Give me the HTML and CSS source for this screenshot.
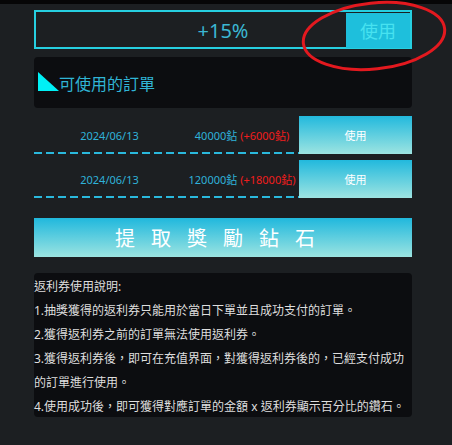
FILE: index.html
```html
<!DOCTYPE html>
<html lang="zh-Hant">
<head>
<meta charset="utf-8">
<link rel="stylesheet" href="styles.css">
</head>
<body>
<div class="topstrip"></div>
<main class="wrap">
  <section class="rate">
    <span class="rate-spacer"></span>
    <span class="rate-value">+15%</span>
    <button class="rate-btn">使用</button>
  </section>

  <section class="orders-head">
    <span class="tri"></span>
    <span class="orders-title">可使用的訂單</span>
  </section>

  <div class="order">
    <div class="order-info">
      <span class="date">2024/06/13</span>
      <span class="amount">40000鉆 <em class="bonus">(+6000鉆)</em></span>
    </div>
    <button class="use-btn">使用</button>
  </div>
  <div class="order order-2">
    <div class="order-info">
      <span class="date">2024/06/13</span>
      <span class="amount">120000鉆 <em class="bonus">(+18000鉆)</em></span>
    </div>
    <button class="use-btn">使用</button>
  </div>

  <button class="claim">提取獎勵鉆石</button>

  <section class="notes">
    <p>返利券使用說明:</p>
    <p>1.抽獎獲得的返利券只能用於當日下單並且成功支付的訂單。</p>
    <p>2.獲得返利券之前的訂單無法使用返利券。</p>
    <p>3.獲得返利券後，即可在充值界面，對獲得返利券後的，已經支付成功的訂單進行使用。</p>
    <p>4.使用成功後，即可獲得對應訂單的金額 x 返利券顯示百分比的鑽石。</p>
  </section>
</main>
<svg class="annot" width="452" height="90" viewBox="0 0 452 90">
  <ellipse cx="374" cy="36" rx="71" ry="33" fill="none" stroke="#e3191f" stroke-width="3" transform="rotate(-6 374 36)"/>
</svg>
</body>
</html>
```

FILE: styles.css
```css
* { box-sizing: border-box; }
html, body { margin: 0; padding: 0; }
body {
  width: 452px;
  height: 445px;
  overflow: hidden;
  background: #1c1f22;
  font-family: "Noto Sans", "Noto Sans CJK TC", sans-serif;
  position: relative;
}
.topstrip { height: 4px; background: #060607; }
.wrap {
  width: 378px;
  margin-left: 34px;
  display: flex;
  flex-direction: column;
}
.rate {
  margin-top: 6px;
  height: 39px;
  border: 2px solid #26cfe0;
  display: grid;
  grid-template-columns: 1fr auto 1fr;
  align-items: center;
}
.rate-value {
  color: #3bb7d3;
  font-size: 20px;
  line-height: 35px;
  padding-top: 1px;
}
.rate-btn {
  justify-self: end;
  width: 64px;
  height: 35px;
  border: 0;
  margin: 0;
  padding: 0;
  background: #1ebfdc;
  color: #47e2f0;
  font-family: inherit;
  font-size: 18px;
}
.orders-head {
  margin-top: 8px;
  height: 51px;
  background: #0c0d10;
  border-radius: 4px;
  display: flex;
  align-items: center;
  padding-left: 4px;
}
.tri {
  width: 21px;
  height: 19px;
  background: #00f0f5;
  clip-path: polygon(0 0, 100% 100%, 0 100%);
  margin-top: -2px;
}
.orders-title {
  color: #30b5d6;
  font-size: 16px;
  margin-left: 0;
}
.order {
  margin-top: 8px;
  height: 38px;
  display: flex;
}
.order-2 { margin-top: 6px; }
.order-info {
  flex: 1;
  display: flex;
  align-items: center;
  font-size: 11px;
  color: #2fb2d9;
  background: repeating-linear-gradient(90deg, #2ab9dd 0 8px, transparent 8px 12px) left bottom / 100% 2px no-repeat;
}
.date { width: 151px; text-align: center; }
.amount { flex: 1; text-align: center; white-space: nowrap; }
.bonus { font-style: normal; color: #f01d1d; }
.use-btn {
  width: 113px;
  height: 100%;
  border: 0;
  margin: 0;
  padding: 0;
  background: linear-gradient(#22b9dd, #9de4e1);
  color: #ffffff;
  font-family: inherit;
  font-size: 11px;
}
.claim {
  margin-top: 20px;
  height: 39px;
  border: 0;
  padding: 0;
  background: linear-gradient(#20b8dd, #9ce4e1);
  color: #ffffff;
  font-family: inherit;
  font-size: 20px;
  letter-spacing: 16px;
  text-align: center;
}
.notes {
  margin-top: 16px;
  height: 144px;
  background: #0c0d10;
  border-radius: 4px;
  padding-top: 2px;
  color: #dedede;
  font-size: 12px;
  line-height: 24px;
}
.notes p { margin: 0; }
.annot {
  position: absolute;
  left: 0;
  top: 0;
  pointer-events: none;
}
```
